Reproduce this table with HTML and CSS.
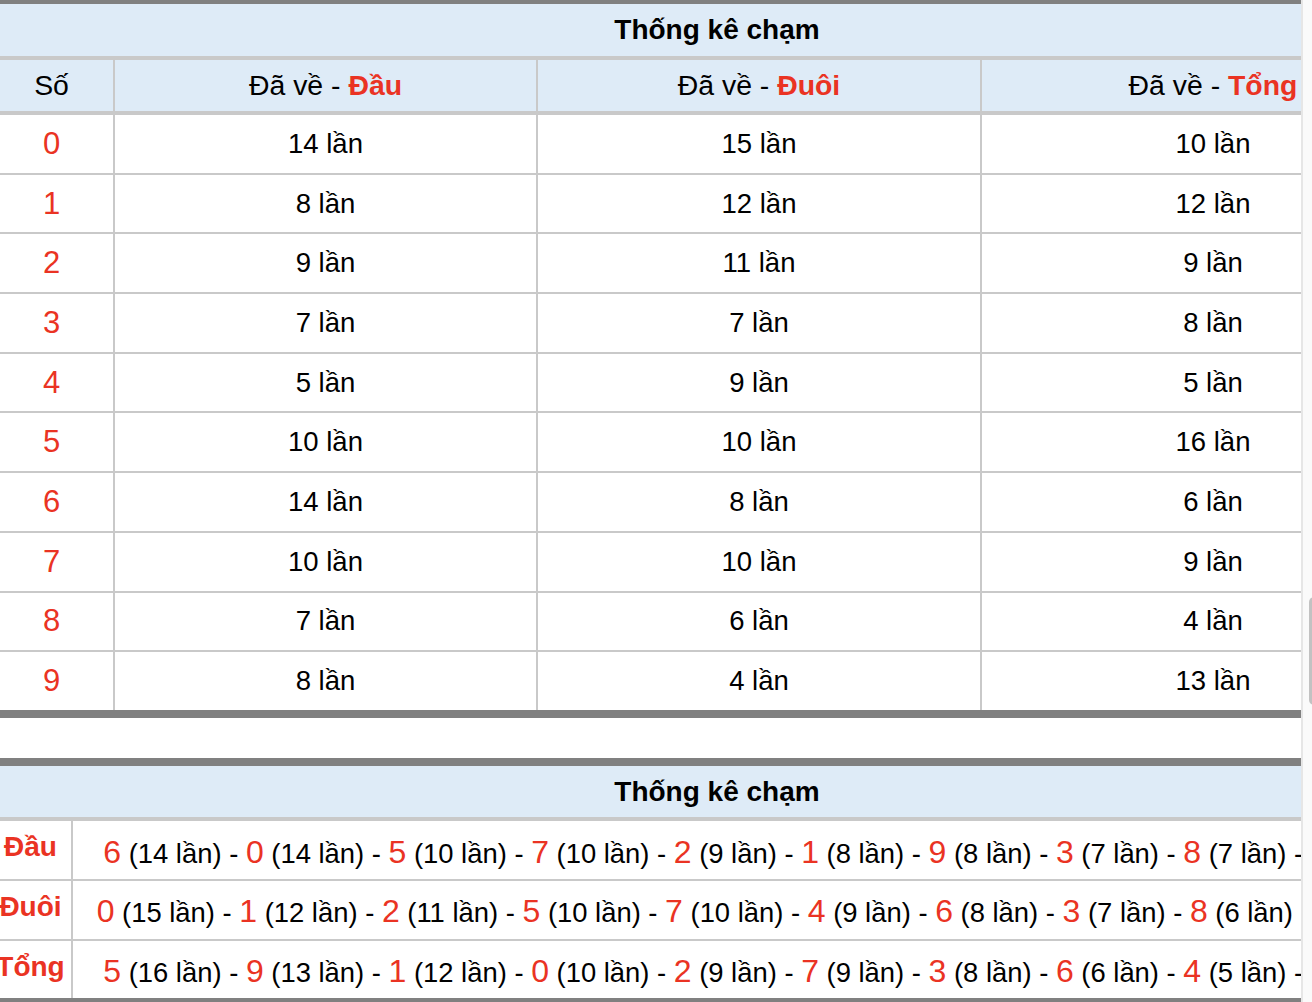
FILE: index.html
```html
<!DOCTYPE html>
<html lang="vi">
<head>
<meta charset="utf-8">
<title>Thống kê chạm</title>
<link rel="stylesheet" href="styles.css">
</head>
<body>
<div class="page">
  <div class="viewport">
    <div class="content">
      <section class="stats">
        <div class="title">Thống kê chạm</div>
        <div class="grid4">
          <div class="hcell"><span>Số</span></div>
          <div class="hcell"><span>Đã về - <b class="red">Đầu</b></span></div>
          <div class="hcell"><span>Đã về - <b class="red">Đuôi</b></span></div>
          <div class="hcell last"><span>Đã về - <b class="red">Tổng</b></span></div>

          <div class="cell num">0</div><div class="cell">14 lần</div><div class="cell">15 lần</div><div class="cell last">10 lần</div>
          <div class="cell num">1</div><div class="cell">8 lần</div><div class="cell">12 lần</div><div class="cell last">12 lần</div>
          <div class="cell num">2</div><div class="cell">9 lần</div><div class="cell">11 lần</div><div class="cell last">9 lần</div>
          <div class="cell num">3</div><div class="cell">7 lần</div><div class="cell">7 lần</div><div class="cell last">8 lần</div>
          <div class="cell num">4</div><div class="cell">5 lần</div><div class="cell">9 lần</div><div class="cell last">5 lần</div>
          <div class="cell num">5</div><div class="cell">10 lần</div><div class="cell">10 lần</div><div class="cell last">16 lần</div>
          <div class="cell num">6</div><div class="cell">14 lần</div><div class="cell">8 lần</div><div class="cell last">6 lần</div>
          <div class="cell num">7</div><div class="cell">10 lần</div><div class="cell">10 lần</div><div class="cell last">9 lần</div>
          <div class="cell num">8</div><div class="cell">7 lần</div><div class="cell">6 lần</div><div class="cell last">4 lần</div>
          <div class="cell num bottom">9</div><div class="cell bottom">8 lần</div><div class="cell bottom">4 lần</div><div class="cell last bottom">13 lần</div>
        </div>
      </section>

      <section class="stats second">
        <div class="title">Thống kê chạm</div>
        <div class="grid2">
          <div class="cell label">Đầu</div>
          <div class="cell last seq"><span><span class="d">6</span> (14 lần) - <span class="d">0</span> (14 lần) - <span class="d">5</span> (10 lần) - <span class="d">7</span> (10 lần) - <span class="d">2</span> (9 lần) - <span class="d">1</span> (8 lần) - <span class="d">9</span> (8 lần) - <span class="d">3</span> (7 lần) - <span class="d">8</span> (7 lần) - <span class="d">4</span> (5 lần)</span></div>
          <div class="cell label">Đuôi</div>
          <div class="cell last seq"><span><span class="d">0</span> (15 lần) - <span class="d">1</span> (12 lần) - <span class="d">2</span> (11 lần) - <span class="d">5</span> (10 lần) - <span class="d">7</span> (10 lần) - <span class="d">4</span> (9 lần) - <span class="d">6</span> (8 lần) - <span class="d">3</span> (7 lần) - <span class="d">8</span> (6 lần) - <span class="d">9</span> (4 lần)</span></div>
          <div class="cell label bottom">Tổng</div>
          <div class="cell last seq bottom"><span><span class="d">5</span> (16 lần) - <span class="d">9</span> (13 lần) - <span class="d">1</span> (12 lần) - <span class="d">0</span> (10 lần) - <span class="d">2</span> (9 lần) - <span class="d">7</span> (9 lần) - <span class="d">3</span> (8 lần) - <span class="d">6</span> (6 lần) - <span class="d">4</span> (5 lần) - <span class="d">8</span> (4 lần)</span></div>
        </div>
      </section>
    </div>
  </div>
  <div class="scrollbar"><div class="thumb"></div></div>
</div>
</body>
</html>
```

FILE: styles.css
```css
* { box-sizing: border-box; }

html, body {
  margin: 0;
  padding: 0;
  background: #ffffff;
}

body {
  font-family: "Liberation Sans", Arial, Helvetica, sans-serif;
  color: #000000;
  overflow: hidden;
}

.page {
  display: flex;
  width: 1312px;
  height: 1002px;
  overflow: hidden;
}

.viewport {
  width: 1301px;
  flex: 0 0 1301px;
  overflow: hidden;
}

.content {
  width: 1454px;
  margin-left: -10px;
  margin-top: -4px;
}

.scrollbar {
  flex: 0 0 11px;
  width: 11px;
  height: 1002px;
  background: #fafafa;
  border-left: 2px solid #e6e6e6;
  overflow: hidden;
}

.thumb {
  width: 10px;
  height: 108px;
  margin-top: 597px;
  margin-left: 6px;
  border-radius: 5px;
  background: #c2c2c2;
}

.stats {
  width: 1454px;
  border-top: 8px solid #808080;
  border-bottom: 8px solid #808080;
}

.stats.second {
  margin-top: 40px;
}

.title {
  height: 55.5px;
  background: #deebf7;
  border-bottom: 4px solid #c9c9c9;
  display: flex;
  align-items: center;
  justify-content: center;
  font-weight: bold;
  font-size: 28px;
}

.grid4 {
  display: grid;
  grid-template-columns: 125px 423px 444px 462px;
}

.grid2 {
  display: grid;
  grid-template-columns: 83px 1371px;
}

.hcell {
  height: 55.5px;
  background: #deebf7;
  border-right: 2px solid #c9c9c9;
  border-bottom: 4px solid #c9c9c9;
  display: flex;
  align-items: center;
  justify-content: center;
  font-size: 28.4px;
  white-space: nowrap;
}

.cell {
  height: 59.7px;
  border-right: 2px solid #c9c9c9;
  border-bottom: 2px solid #c9c9c9;
  display: flex;
  align-items: center;
  justify-content: center;
  font-size: 27.5px;
  white-space: nowrap;
}

.cell.bottom {
  height: 57.7px;
  border-bottom: none;
}

.last {
  border-right: none;
}

.red {
  color: #ea3323;
  font-weight: bold;
}

.num {
  color: #ea3323;
  font-size: 31px;
}

.label {
  color: #ea3323;
  font-weight: bold;
  font-size: 28px;
  align-items: flex-start;
  padding-top: 10px;
}

.seq {
  font-size: 27.4px;
  padding-top: 4px;
}

.d {
  color: #ea3323;
  font-size: 32px;
}
```
